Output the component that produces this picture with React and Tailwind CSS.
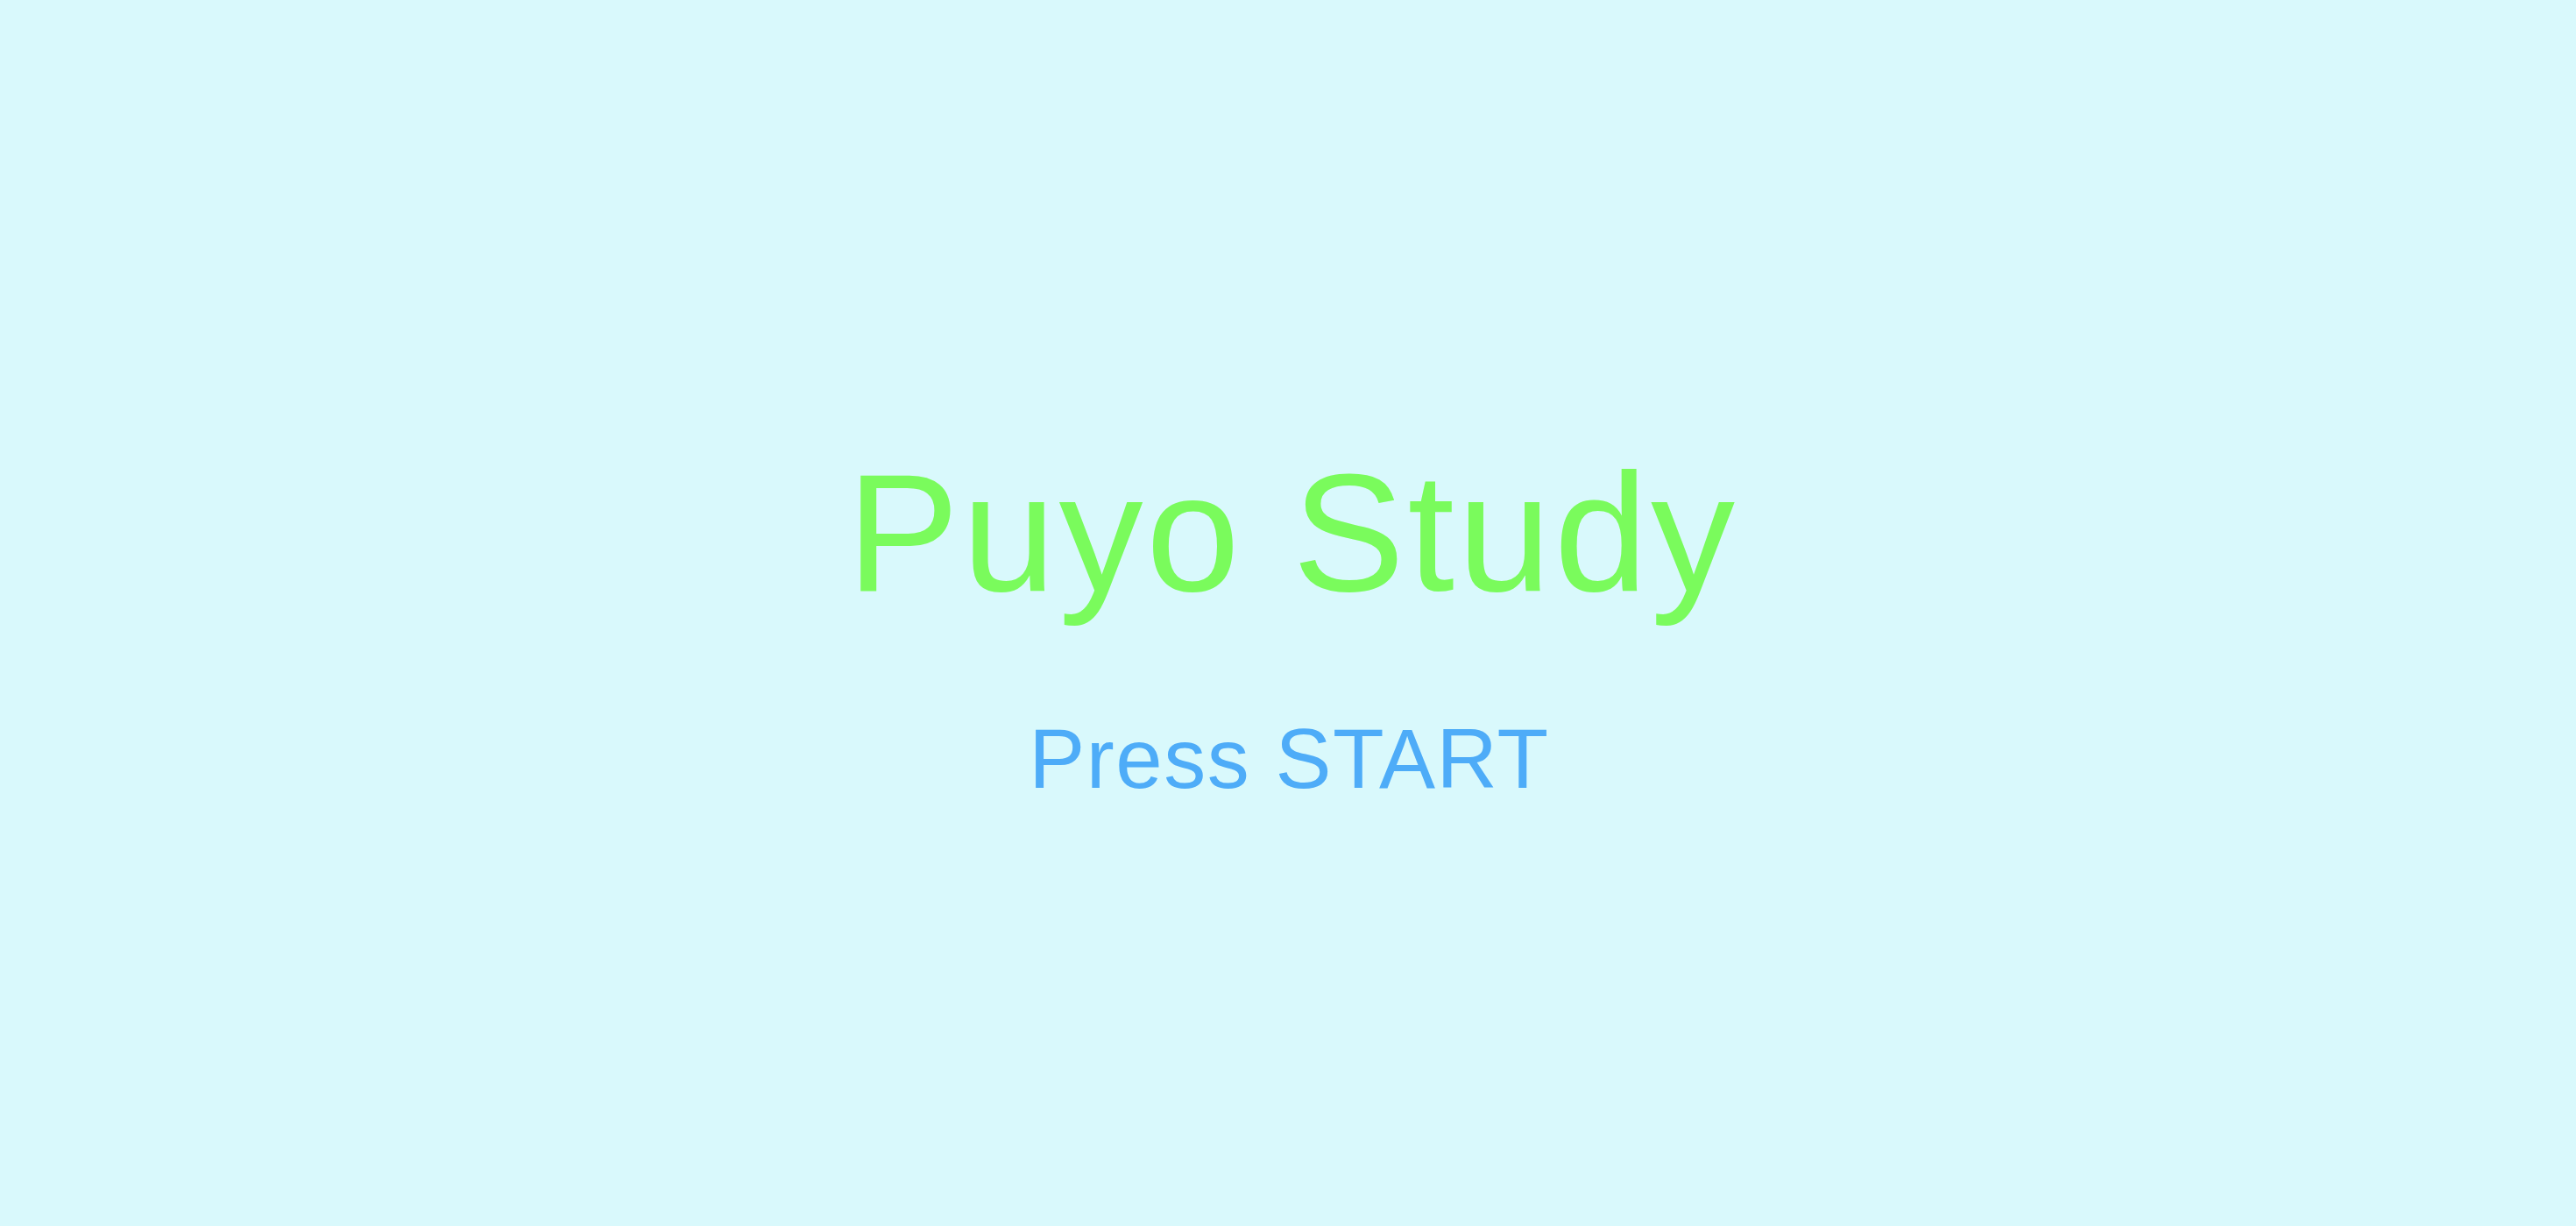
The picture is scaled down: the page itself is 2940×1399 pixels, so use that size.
export default function App() {
  return (
    <div
      className="min-h-screen w-full bg-[#d9f9fc] flex flex-col items-center justify-center pt-[26px]"
      style={{ fontFamily: '"Liberation Sans", Arial, sans-serif' }}
    >
      <h1 className="pl-[10px] text-[192px] leading-none font-normal text-[#7afb5c] tracking-[3.5px]">
        Puyo Study
      </h1>
      <p className="mt-[114px] pl-[3px] text-[96px] leading-none text-[#4eacf8] tracking-[1.5px]">
        Press START
      </p>
    </div>
  );
}
